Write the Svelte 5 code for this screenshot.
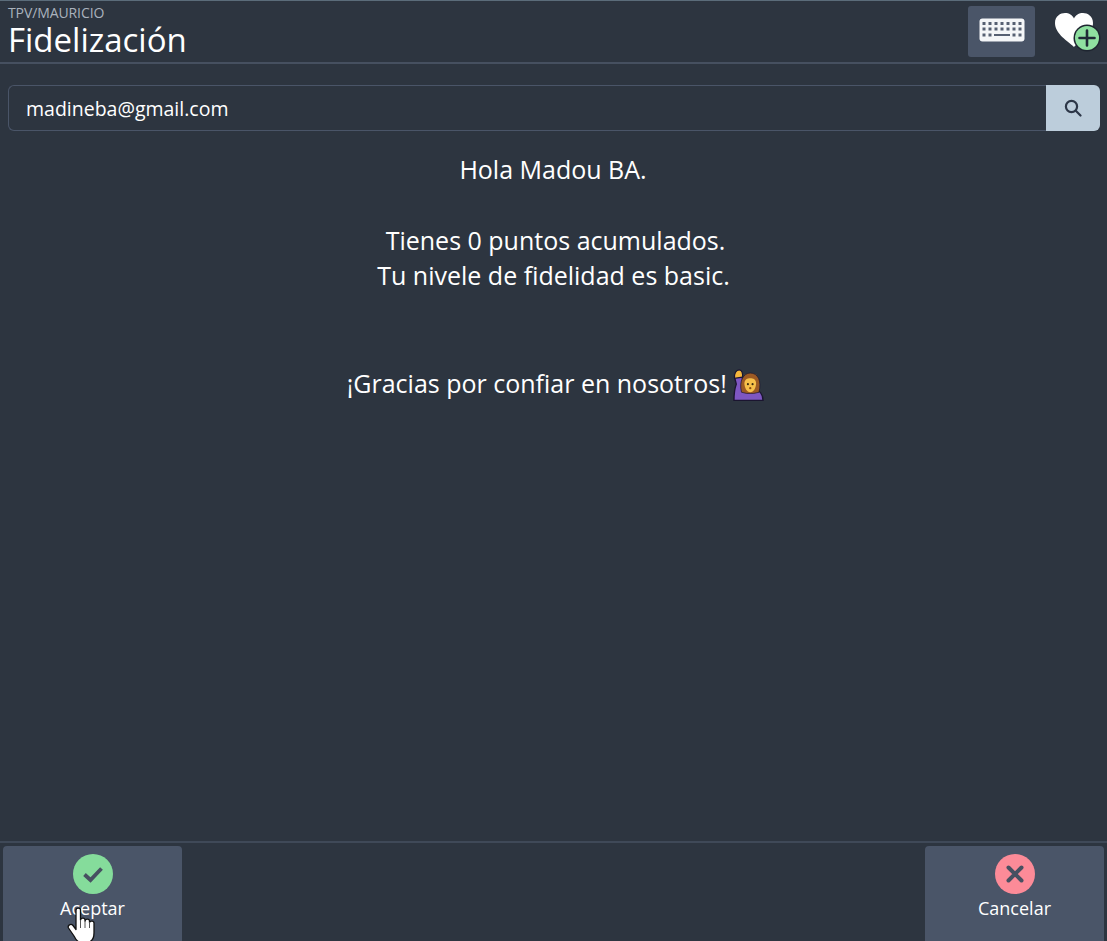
<div class="page">
  <header class="top">
    <div class="titles">
      <div class="crumb">TPV/MAURICIO</div>
      <h1>Fidelización</h1>
    </div>
    <div class="actions">
      <button class="kbd" aria-label="Teclado">
        <svg width="46" height="24" viewBox="0 0 46 24">
          <rect x="0.5" y="0.5" width="45" height="23" rx="3" fill="#f4f6f8" />
          {#each [4, 9.5] as y}
            {#each [3.5, 9.500, 15.500, 21.500, 27.500, 33.500, 39.500] as x}
              <rect {x} {y} width="3" height="3" fill="#566072" />
            {/each}
          {/each}
          {#each [3.5, 9.500, 33.500, 39.500] as x}
            <rect {x} y="15.500" width="3" height="3" fill="#566072" />
          {/each}
          <rect x="15" y="16" width="16" height="2" fill="#566072" />
        </svg>
      </button>
      <div class="heart" aria-label="Añadir fidelización">
        <svg width="46" height="42" viewBox="0 0 46 42">
          <path d="M19 35 C13 29 0 22 0 11 C0 4 5.500 1 10 1 C14 1 17.500 3 19 6.500 C20.500 3 24 1 28 1 C32.500 1 38 4 38 11 C38 22 25 29 19 35 Z" fill="#fff" />
          <circle cx="32" cy="26" r="13.500" fill="#1e2530" />
          <circle cx="32" cy="26" r="12" fill="#8fe0a0" />
          <path d="M32 18.500 V33.500 M24.500 26 H39.500" stroke="#1f2a36" stroke-width="2.600" stroke-linecap="round" />
        </svg>
      </div>
    </div>
  </header>

  <div class="search">
    <div class="value">madineba@gmail.com</div>
    <button class="go" aria-label="Buscar">
      <svg width="18" height="18" viewBox="0 0 18 18" fill="none" stroke="#2d3748" stroke-width="2.200">
        <circle cx="7.500" cy="7.500" r="5.600" />
        <path d="M11.800 11.800 L16.500 16.500" stroke-linecap="round" />
      </svg>
    </button>
  </div>

  <main class="message">
    <p class="hello">Hola Madou BA.</p>
    <p class="points">Tienes 0 puntos acumulados.</p>
    <p>Tu nivele de fidelidad es basic.</p>
    <p class="thanks">
      ¡Gracias por confiar en nosotros!
      <svg class="emoji" width="31" height="32" viewBox="2.500 0 26 27.500">
        <path d="M3 27 C3 22 3.500 17 5 13 L3.500 7 L10 5.500 L11 14 L13 17 L20 17 C25 18 28 22 28 27 Z" fill="#7e57c2" stroke="#1b1530" stroke-width="1.200" />
        <path d="M3.500 8 C3 3.500 5 0.800 7.500 0.800 C10 0.800 10.800 4 10.200 7 Z" fill="#f6b73c" stroke="#1b1530" stroke-width="1" />
        <path d="M9.500 20 C7 10 11.500 3.500 17 3.500 C23.500 3.500 27 10 24.500 20 L20 21 L14 21 Z" fill="#9c5a24" stroke="#1b1530" stroke-width="0.600" />
        <path d="M12 12.500 C12 9 14.500 8 17 8 C19.500 8 22 9 22 12.500 C22 16 20 20 17 20 C14 20 12 16 12 12.500 Z" fill="#f7c04a" />
        <circle cx="15" cy="13" r="0.900" fill="#3a2a12" />
        <circle cx="19" cy="13" r="0.900" fill="#3a2a12" />
        <circle cx="17" cy="16.500" r="1" fill="#8a4a12" />
      </svg>
    </p>
  </main>

  <footer class="bottom">
    <button class="action">
      <span class="badge ok">
        <svg width="24" height="20" viewBox="0 0 24 20" fill="none" stroke="#475061" stroke-width="3.800">
          <path d="M3.500 10.500 L9.500 16 L20.500 4.500" />
        </svg>
      </span>
      <span class="label">Aceptar</span>
      <svg class="cursor" width="30" height="36" viewBox="0 0 30 36">
        <path d="M9 3 C9 0.500 13.500 0.500 13.500 3 V13 C14 10.500 18 10.500 18 13 V14 C18.500 11.500 22.500 11.500 22.500 14 V15.500 C23 13.500 27 13.500 27 16 V26 C27 32 24 36 17 36 C11 36 9 33 7 29 L1.500 21 C0.200 18.500 3.800 16 6 18.500 L9 22.500 Z" fill="#fff" stroke="#111" stroke-width="1.300" stroke-linejoin="round" />
        <path d="M13.500 13 V21 M18 14 V21 M22.500 15 V21" stroke="#555" stroke-width="1" fill="none" />
      </svg>
    </button>
    <button class="action">
      <span class="badge no">
        <svg width="20" height="20" viewBox="0 0 20 20" fill="none" stroke="#475061" stroke-width="4" stroke-linecap="round">
          <path d="M3.500 3.500 L16.500 16.500 M16.500 3.500 L3.500 16.500" />
        </svg>
      </span>
      <span class="label">Cancelar</span>
    </button>
  </footer>
</div>

<style>
  :global(body) {
    margin: 0;
    background: #2d3540;
  }
  .page {
    box-sizing: border-box;
    width: 1107px;
    height: 941px;
    display: flex;
    flex-direction: column;
    background: #2d3540;
    color: #fff;
    font-family: "Open Sans", "Noto Sans", sans-serif;
    border-top: 1px solid #5b6c7a;
    overflow: hidden;
  }
  .top {
    height: 63px;
    flex: none;
    box-sizing: border-box;
    display: flex;
    justify-content: space-between;
    padding: 5px 6px 0 8px;
    border-bottom: 2px solid #465060;
  }
  .crumb {
    font-size: 14px;
    line-height: 15px;
    margin-top: -1px;
    color: #aab2bd;
    letter-spacing: -0.1px;
  }
  h1 {
    margin: 1px 0 0;
    font-size: 33px;
    line-height: 38px;
    font-weight: 400;
  }
  .actions {
    display: flex;
    gap: 20px;
    align-items: flex-start;
  }
  .kbd {
    width: 67px;
    height: 51px;
    background: #4a5568;
    border: 0;
    border-radius: 3px;
    padding: 0 0 4px;
    display: flex;
    align-items: center;
    justify-content: center;
  }
  .heart {
    margin-top: 6px;
    height: 46px;
  }
  .search {
    flex: none;
    display: flex;
    height: 46px;
    margin: 21px 7px 0 8px;
  }
  .value {
    flex: 1;
    box-sizing: border-box;
    border: 1px solid #4a5568;
    border-right: 0;
    border-radius: 6px 0 0 6px;
    padding: 0 17px;
    display: flex;
    align-items: center;
    font-size: 19.5px;
  }
  .go {
    width: 54px;
    background: #bccddb;
    border: 0;
    border-radius: 0 6px 6px 0;
    padding: 0;
    display: flex;
    align-items: center;
    justify-content: center;
  }
  .message {
    flex: 1;
    text-align: center;
    font-size: 25px;
    line-height: 35px;
    padding-top: 21px;
  }
  .message p {
    margin: 0;
  }
  .points {
    margin-top: 36px !important;
    padding-left: 4px;
  }
  .hello {
    padding-right: 1px;
  }
  .thanks {
    margin-top: 73px !important;
    padding-left: 4px;
  }
  .emoji {
    vertical-align: -8px;
  }
  .bottom {
    flex: none;
    height: 100px;
    box-sizing: border-box;
    display: flex;
    justify-content: space-between;
    padding: 3px 3px 0;
    border-top: 2px solid #3f4958;
  }
  .action {
    position: relative;
    width: 179px;
    height: 100px;
    background: #4a5568;
    border: 0;
    border-radius: 4px 4px 0 0;
    color: #fff;
    font-family: inherit;
    display: flex;
    flex-direction: column;
    align-items: center;
    padding: 8px 0 0;
  }
  .badge {
    width: 40px;
    height: 40px;
    border-radius: 50%;
    display: flex;
    align-items: center;
    justify-content: center;
  }
  .ok {
    background: #85dc9b;
  }
  .no {
    background: #fc8b98;
  }
  .label {
    margin-top: 1px;
    font-size: 18px;
    line-height: 26px;
  }
  .cursor {
    position: absolute;
    left: 64px;
    top: 61px;
  }
</style>
